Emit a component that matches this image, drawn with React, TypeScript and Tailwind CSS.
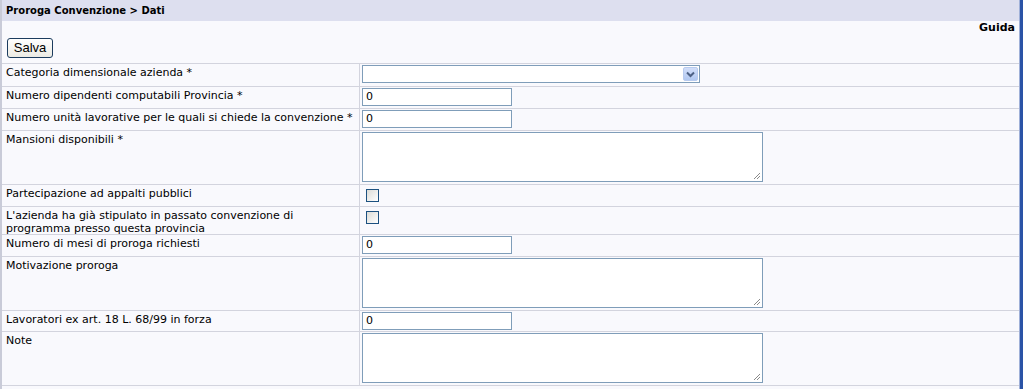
import React from 'react'

const label = 'whitespace-nowrap px-[4px] pt-[2px] text-[11px] leading-[13px] text-black'

function TextInput({ value = '0' }: { value?: string }) {
  return (
    <div className="flex h-[18px] w-[150px] items-center border border-[#7f9db9] bg-white pl-[3px] text-[11px] text-black">
      {value}
    </div>
  )
}

function TextArea() {
  return (
    <div className="relative h-[50px] w-[401px] border border-[#7f9db9] bg-white">
      <svg className="absolute bottom-[1px] right-[1px]" width="9" height="9" viewBox="0 0 9 9">
        <path d="M8 2 L2 8 M8 5 L5 8" stroke="#8a8a8a" strokeWidth="1" />
      </svg>
    </div>
  )
}

function Checkbox() {
  return (
    <div className="ml-[4px] mt-[3px] h-[13px] w-[13px] border border-[#1c5180] bg-gradient-to-br from-[#dcdcd7] to-[#ffffff]" />
  )
}

function Select() {
  return (
    <div className="flex h-[18px] w-[338px] items-center justify-end border border-[#7f9db9] bg-white pr-[1px]">
      <div className="flex h-[14px] w-[15px] items-center justify-center rounded-[2px] border border-[#b8cbef] bg-gradient-to-b from-[#d2def9] to-[#b1c8f1]">
        <svg width="9" height="7" viewBox="0 0 9 7">
          <path d="M1 1.5 L4.5 5 L8 1.5" fill="none" stroke="#4d6185" strokeWidth="2" />
        </svg>
      </div>
    </div>
  )
}

type Row = { text: React.ReactNode; field: React.ReactNode; h: number }

const rows: Row[] = [
  { text: 'Categoria dimensionale azienda *', field: <Select />, h: 22 },
  { text: 'Numero dipendenti computabili Provincia *', field: <TextInput />, h: 22 },
  { text: 'Numero unità lavorative per le quali si chiede la convenzione *', field: <TextInput />, h: 22 },
  { text: 'Mansioni disponibili *', field: <TextArea />, h: 54 },
  { text: 'Partecipazione ad appalti pubblici', field: <Checkbox />, h: 22 },
  {
    text: (
      <>
        L'azienda ha già stipulato in passato convenzione di
        <br />
        programma presso questa provincia
      </>
    ),
    field: <Checkbox />,
    h: 28,
  },
  { text: 'Numero di mesi di proroga richiesti', field: <TextInput />, h: 22 },
  { text: 'Motivazione proroga', field: <TextArea />, h: 54 },
  { text: 'Lavoratori ex art. 18 L. 68/99 in forza', field: <TextInput />, h: 21 },
  { text: 'Note', field: <TextArea />, h: 54 },
]

export default function App() {
  return (
    <div className="flex h-[389px] w-[1023px] overflow-hidden bg-[#f9f9fd] font-['DejaVu_Sans',Verdana,sans-serif]">
      <div className="w-[2px] shrink-0 bg-[#c9cbd8]" />
      <div className="flex min-w-0 flex-1 flex-col">
        {/* Title bar */}
        <div className="flex h-[21px] items-center bg-[#dddfef] pl-[4px] text-[10px] font-bold text-black">
          Proroga Convenzione &gt; Dati
        </div>
        <div className="flex justify-end pr-[4px] text-[11px] font-bold leading-[13px] text-black">
          Guida
        </div>
        <div className="pl-[5px] pt-[4px]">
          <button className="flex h-[20px] w-[46px] items-center justify-center rounded-[3px] border border-[#1c3c5e] bg-gradient-to-b from-[#ffffff] to-[#ecebe4] font-['Liberation_Sans',Arial,sans-serif] text-[13px] text-black">
            Salva
          </button>
        </div>
        {/* Form grid */}
        <div className="mt-[5px] grid grid-cols-[358px_1fr] border-t border-b border-[#d3d4de]">
          {rows.map((r, i) => (
            <React.Fragment key={i}>
              <div
                className={`${label} border-r border-[#d3d4de] ${i > 0 ? 'border-t' : ''}`}
                style={{ height: r.h }}
              >
                {r.text}
              </div>
              <div
                className={`flex items-start pl-[2px] pt-[1px] ${i > 0 ? 'border-t border-[#d3d4de]' : ''}`}
                style={{ height: r.h }}
              >
                {r.field}
              </div>
            </React.Fragment>
          ))}
        </div>
      </div>
      <div className="w-[1px] shrink-0 bg-[#9fb0d8]" />
      <div className="w-[3px] shrink-0 bg-[#2a53a6]" />
    </div>
  )
}
